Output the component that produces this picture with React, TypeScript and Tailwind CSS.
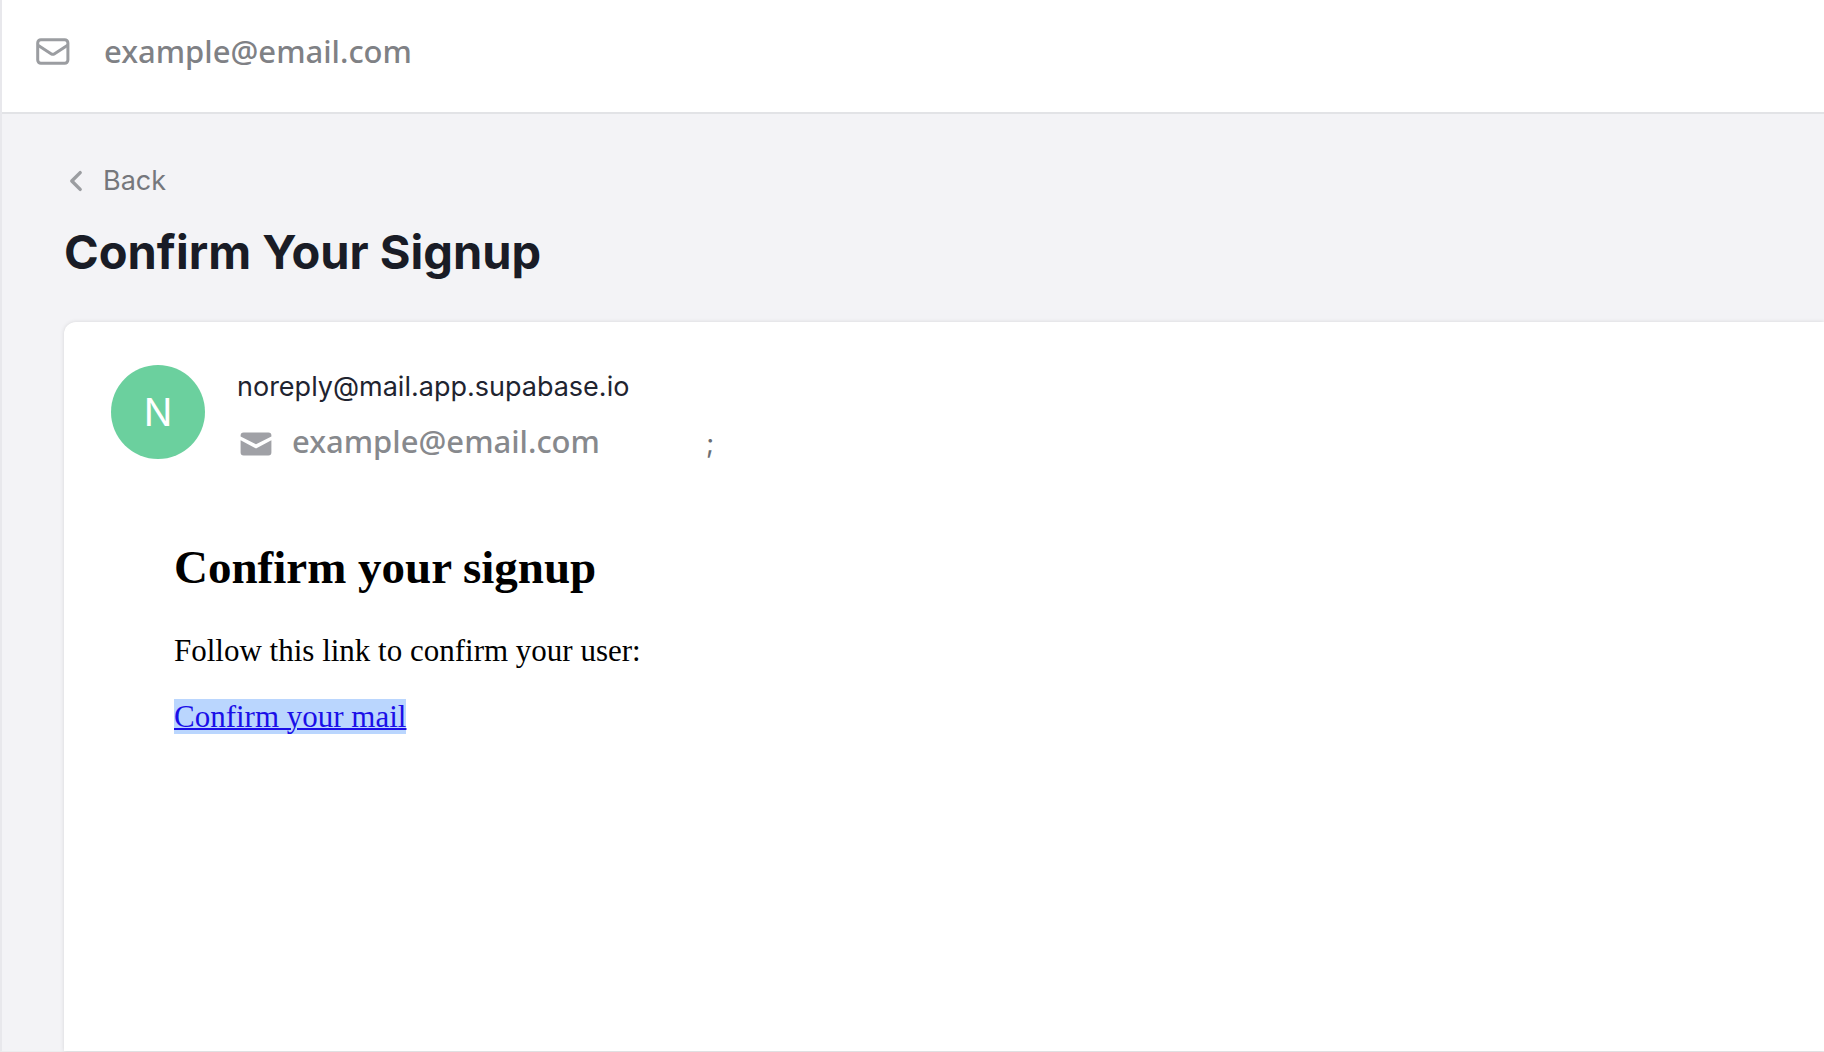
/**
 * Inbox message view:
 *  - Top bar with the mailbox address
 *  - Back button and subject line
 *  - Message card with sender, recipient and mail body
 */
const ADDRESS = "example@email.com";
const SENDER = "noreply@mail.app.supabase.io";

const MailOutline = () => (
  <svg viewBox="0 0 34 27" className="w-[34px] h-[27px] shrink-0" fill="none" aria-hidden="true">
    <rect x="1.7" y="1.7" width="30.2" height="23.6" rx="3.2" stroke="#9b9da1" strokeWidth="3" />
    <path d="M2 7.2 15.4 15.9Q16.8 16.8 18.2 15.9L31.6 7.2" stroke="#9b9da1" strokeWidth="3" />
  </svg>
);

const MailSolid = () => (
  <svg viewBox="0 0 32 24" className="w-8 h-6 shrink-0" fill="#a0a1a6" aria-hidden="true">
    <path d="M0.6 4.4V3.6A3 3 0 0 1 3.6 0.6H28.4A3 3 0 0 1 31.4 3.6V4.4L16 12.2Z" />
    <path d="M0.6 8.2 16 16.4 31.4 8.2V20.6A3 3 0 0 1 28.4 23.6H3.6A3 3 0 0 1 0.6 20.6Z" />
  </svg>
);

const ChevronLeft = () => (
  <svg viewBox="0 0 14 22" className="w-[14px] h-[22px] shrink-0" fill="none" aria-hidden="true">
    <path d="M11.2 2.6 2.8 11 11.2 19.4" stroke="#9b9da1" strokeWidth="3.4" strokeLinecap="round" strokeLinejoin="round" />
  </svg>
);

const TopBar = () => (
  <header className="flex items-center gap-[34px] h-[114px] pl-[34px] pb-[10px] bg-white border-b-2 border-[#e2e3e6]">
    <MailOutline />
    <span className="font-['Noto_Sans',sans-serif] font-medium text-[31px] leading-10 text-[#7f8185]">{ADDRESS}</span>
  </header>
);

const Message = () => (
  <article className="grow bg-white rounded-tl-xl shadow-[0_0_4px_rgba(0,0,0,0.12)] pl-[47px] pt-[43px]">
    <div className="flex gap-8">
      <div className="flex items-center justify-center w-[94px] h-[94px] rounded-full bg-[#6bd09e] text-white text-[38px]">
        N
      </div>
      <div>
        <p className="text-[27px] leading-[44px] text-[#1f2430]">{SENDER}</p>
        <div className="flex items-end gap-5 pl-[3px] pt-4">
          <div className="pb-1">
            <MailSolid />
          </div>
          <div className="flex items-baseline gap-5 leading-8">
            <span className="w-[394px] font-['Noto_Sans',sans-serif] font-medium text-[31px] text-[#87898d]">{ADDRESS}</span>
            <span className="text-[27px] text-[#6b6e73]">;</span>
          </div>
        </div>
      </div>
    </div>

    {/* Mail body */}
    <div className="pl-[63px] pt-20 font-['Liberation_Serif',serif] text-black">
      <h2 className="font-bold text-[47px] leading-[54px]">Confirm your signup</h2>
      <p className="mt-10 text-[31px] leading-[34px]">Follow this link to confirm your user:</p>
      <p className="mt-8 text-[31px] leading-[34px]">
        <a href="#confirm" className="bg-[#bad6fe] text-[#1a0fe8] underline decoration-2">Confirm your mail</a>
      </p>
    </div>
  </article>
);

const App = () => (
  <div className="flex flex-col min-h-screen bg-[#f3f3f6] border-l-2 border-b border-l-[#e8e8ec] border-b-[#ececee] font-['Inter',sans-serif]">
    <TopBar />
    <main className="grow flex flex-col pl-[62px] pt-[47px]">
      <button type="button" className="flex items-center self-start gap-5 pl-[5px] text-[27px] leading-10 text-[#75777c]">
        <ChevronLeft />
        Back
      </button>
      <h1 className="mt-[19px] mb-[38px] text-[47px] leading-[64px] font-bold text-[#191c26]">Confirm Your Signup</h1>
      <Message />
    </main>
  </div>
);

export default App;
